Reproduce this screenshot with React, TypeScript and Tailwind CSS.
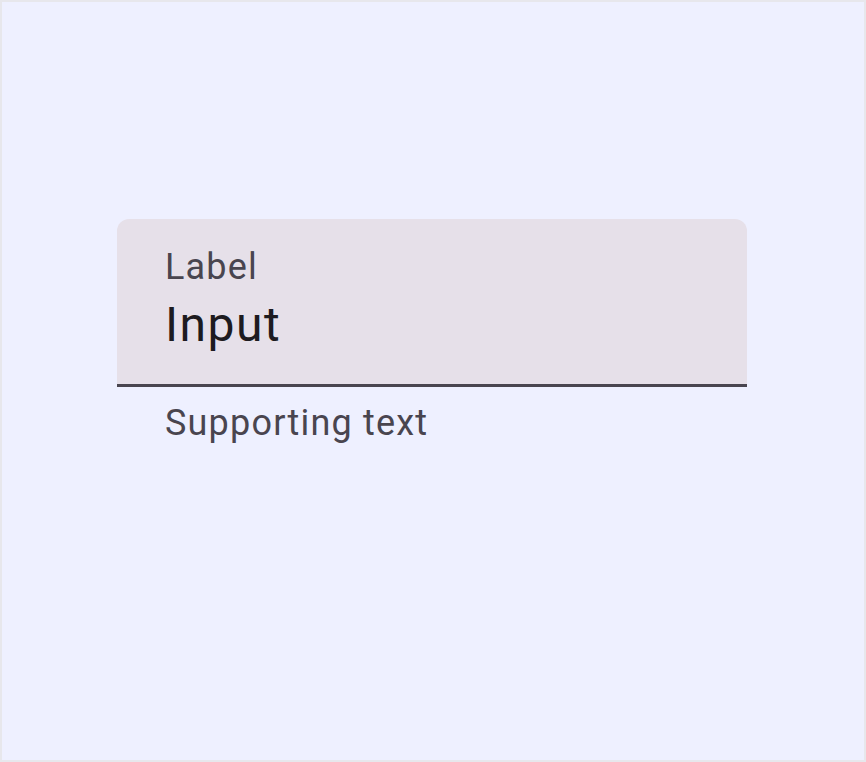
export default function App() {
  return (
    <div className="h-[762px] w-[866px] border-2 border-[#e7e7ec] bg-[#eef0ff] font-['Roboto',sans-serif]">
      <div className="flex flex-col items-start pl-[115px] pt-[217px]">
        <div className="w-[630px]">
          <div className="flex h-[168px] flex-col rounded-t-[12px] border-b-[3px] border-[#49454f] bg-[#e6e0e9] px-[48px] pt-[24px]">
            <span className="h-[48px] text-[36px] leading-[48px] tracking-[1.2px] text-[#49454f]">Label</span>
            <span className="h-[72px] text-[48px] leading-[68px] tracking-[1.5px] text-[#1d1b20]">Input</span>
          </div>
          <div className="px-[48px] pt-[12px] text-[36px] leading-[48px] tracking-[1.2px] text-[#49454f]">
            Supporting text
          </div>
        </div>
      </div>
    </div>
  );
}
